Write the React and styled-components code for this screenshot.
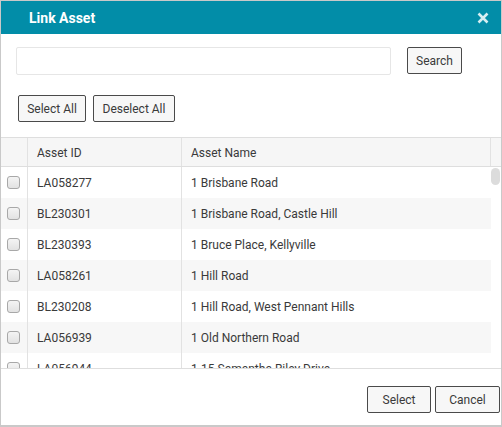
import React from 'react';
import styled, { createGlobalStyle } from 'styled-components';

const GlobalStyle = createGlobalStyle`
  html, body {
    margin: 0;
    padding: 0;
    background: #fff;
  }
  body {
    font-family: Roboto, 'Liberation Sans', Arial, sans-serif;
    color: #333;
  }
  * { box-sizing: border-box; }
`;

const Dialog = styled.div`
  width: 502px;
  height: 427px;
  border: 1px solid #c9c9c9;
  border-bottom-width: 2px;
  display: flex;
  flex-direction: column;
  background: #fff;
`;

const Header = styled.div`
  height: 33px;
  flex: none;
  background: #028da8;
  display: flex;
  align-items: center;
  justify-content: space-between;
  padding: 0 12px 0 28px;
`;

const Title = styled.h1`
  margin: 0;
  font-size: 14px;
  font-weight: 700;
  color: #fff;
`;

const Close = styled.button`
  border: 0;
  background: none;
  padding: 0;
  width: 12px;
  height: 12px;
  display: flex;
  cursor: pointer;
`;

const Toolbar = styled.div`
  display: flex;
  align-items: flex-start;
  gap: ${(p) => p.$gap || 7}px;
  padding: ${(p) => p.$pad};
`;

const SearchInput = styled.input`
  width: 375px;
  height: 28px;
  border: 1px solid #e6e6e6;
  border-radius: 2px;
  padding: 0 8px;
  font: inherit;
  font-size: 12px;
  outline: none;
`;

const Button = styled.button`
  height: 27px;
  width: ${(p) => p.$w}px;
  border: 1px solid #4a4a4a;
  border-radius: 2px;
  background: #f7f7f7;
  color: #3a3a3a;
  font-family: Roboto, 'Liberation Sans', Arial, sans-serif;
  font-size: 12px;
  padding: 0;
  cursor: pointer;
`;

const Table = styled.div`
  border-top: 1px solid #dedede;
  display: flex;
  flex-direction: column;
  height: 231px;
`;

const cols = '27px 154px 1fr';

const HeadRow = styled.div`
  display: grid;
  grid-template-columns: ${cols} 10px;
  height: 29px;
  background: #f6f6f6;
  border-bottom: 1px solid #dedede;
  font-size: 12px;
  color: #3a3a3a;
`;

const HeadCell = styled.div`
  display: flex;
  align-items: center;
  padding: 2px 0 0 9px;
  border-right: ${(p) => (p.$last ? 'none' : '1px solid #e2e2e2')};
`;

const BodyWrap = styled.div`
  flex: 1;
  display: flex;
  overflow: hidden;
`;

const Rows = styled.div`
  flex: 1;
  overflow: hidden;
`;

const Row = styled.div`
  display: grid;
  grid-template-columns: ${cols};
  height: 31px;
  background: ${(p) => (p.$odd ? '#f7f7f7' : '#fff')};
  font-size: 12px;
  color: #3a3a3a;
`;

const Cell = styled.div`
  display: flex;
  align-items: center;
  padding-left: ${(p) => (p.$check ? 0 : 9)}px;
  justify-content: ${(p) => (p.$check ? 'center' : 'flex-start')};
  border-right: ${(p) => (p.$last ? 'none' : '1px solid #e2e2e2')};
  white-space: nowrap;
  overflow: hidden;
`;

const Check = styled.span`
  width: 13px;
  height: 13px;
  border: 1px solid #a8a8a8;
  border-radius: 3px;
  background: linear-gradient(#f4f4f4, #e2e2e2);
  margin-right: 1px;
`;

const Scrollbar = styled.div`
  width: 10px;
  flex: none;
  padding-top: 1px;
`;

const Thumb = styled.div`
  width: 9px;
  height: 17px;
  border-radius: 5px;
  background: #dcdcdc;
`;

const Footer = styled.div`
  border-top: 1px solid #dedede;
  flex: 1;
  display: flex;
  justify-content: flex-end;
  align-items: flex-start;
  gap: 4px;
  padding: 17px 1px 0 0;
`;

const assets = [
  ['LA058277', '1 Brisbane Road'],
  ['BL230301', '1 Brisbane Road, Castle Hill'],
  ['BL230393', '1 Bruce Place, Kellyville'],
  ['LA058261', '1 Hill Road'],
  ['BL230208', '1 Hill Road, West Pennant Hills'],
  ['LA056939', '1 Old Northern Road'],
  ['LA056944', '1-15 Samantha Riley Drive'],
];

export default function App() {
  return (
    <>
      <GlobalStyle />
      <Dialog>
        <Header>
          <Title>Link Asset</Title>
          <Close aria-label="Close">
            <svg width="12" height="12" viewBox="0 0 12 12">
              <path d="M1.5 1.5 L10.5 10.5 M10.5 1.5 L1.5 10.5" stroke="#d6eef2" strokeWidth="2.6" strokeLinecap="butt" />
            </svg>
          </Close>
        </Header>
        <Toolbar $pad="13px 0 0 15px" $gap={16}>
          <SearchInput />
          <Button $w={55}>Search</Button>
        </Toolbar>
        <Toolbar $pad="20px 0 15px 17px">
          <Button $w={68}>Select All</Button>
          <Button $w={82}>Deselect All</Button>
        </Toolbar>
        <Table>
          <HeadRow>
            <HeadCell />
            <HeadCell>Asset ID</HeadCell>
            <HeadCell>Asset Name</HeadCell>
            <HeadCell $last />
          </HeadRow>
          <BodyWrap>
            <Rows>
              {assets.map(([id, name], i) => (
                <Row key={id} $odd={i % 2 === 1}>
                  <Cell $check><Check /></Cell>
                  <Cell>{id}</Cell>
                  <Cell $last>{name}</Cell>
                </Row>
              ))}
            </Rows>
            <Scrollbar>
              <Thumb />
            </Scrollbar>
          </BodyWrap>
        </Table>
        <Footer>
          <Button $w={64}>Select</Button>
          <Button $w={65}>Cancel</Button>
        </Footer>
      </Dialog>
    </>
  );
}
